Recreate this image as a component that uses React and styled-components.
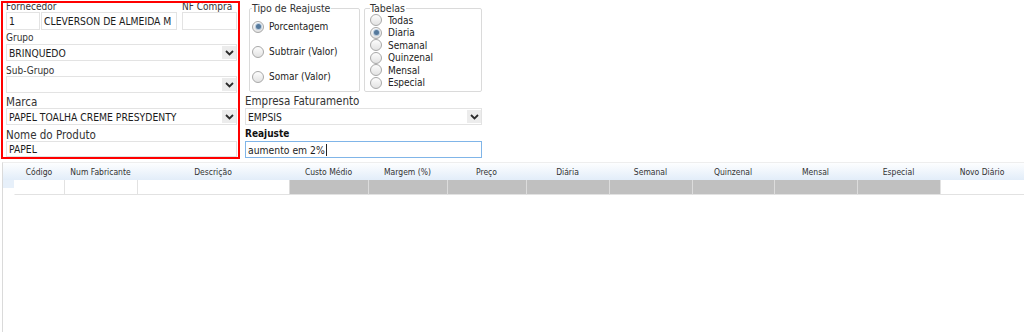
import React from 'react';
import styled, { createGlobalStyle } from 'styled-components';

const GlobalStyle = createGlobalStyle`
  html, body {
    margin: 0;
    padding: 0;
    background: #fff;
  }
  body {
    font-family: "DejaVu Sans Condensed", "DejaVu Sans", Verdana, sans-serif;
    color: #1c1c1c;
    overflow: hidden;
  }
`;

const Page = styled.div`
  width: 1024px;
  height: 332px;
  display: flex;
  flex-direction: column;
  overflow: hidden;
`;

const Top = styled.div`
  display: flex;
  flex: none;
  height: 162px;
`;

// red frame around the product filters
const FilterPanel = styled.div`
  box-sizing: border-box;
  width: 239px;
  height: 158px;
  margin: 1px 0 0 1px;
  border: 2px solid #ff0000;
  padding: 0 1px 0 3px;
  overflow: hidden;
  display: flex;
  flex-direction: column;
`;

const Label = styled.div`
  box-sizing: border-box;
  height: ${p => p.$h || 14}px;
  padding-top: ${p => p.$pt || 0}px;
  font-size: ${p => (p.$big ? '11.5px' : '10px')};
  line-height: ${p => (p.$big ? '13px' : '11px')};
  font-weight: ${p => (p.$bold ? 'bold' : 'normal')};
  color: ${p => (p.$bold ? '#111' : '#333')};
  white-space: nowrap;
`;

const FornecedorRow = styled.div`
  display: flex;
  gap: 5px;
  margin-top: -2px;
`;

const FieldCol = styled.div`
  display: flex;
  flex-direction: column;
  flex: ${p => p.$grow ? 1 : 'none'};
`;

const InputPair = styled.div`
  display: flex;
  gap: 1px;
`;

const Field = styled.div`
  box-sizing: border-box;
  width: ${p => p.$w ? `${p.$w}px` : 'auto'};
  height: ${p => p.$h || 18}px;
  border: 1px solid ${p => p.$focused ? '#80b5e8' : '#e3e3e3'};
  background: #fff;
  padding: 0 2px;
  display: flex;
  align-items: center;
  font-size: 10.3px;
  color: #1c1c1c;
  white-space: nowrap;
  overflow: hidden;
`;

const Caret = styled.span`
  display: inline-block;
  width: 1px;
  height: 12px;
  margin-left: 1px;
  background: #222;
`;

const SelectBox = styled.div`
  box-sizing: border-box;
  height: 17px;
  border: 1px solid #e3e3e3;
  background: #fff;
  display: flex;
  align-items: stretch;
  font-size: 10.3px;
`;

const SelectValue = styled.div`
  flex: 1;
  display: flex;
  align-items: center;
  padding-left: 2px;
  white-space: nowrap;
  overflow: hidden;
`;

const SelectArrow = styled.div`
  width: 14px;
  margin: 1px 0;
  background: #ececec;
  display: flex;
  align-items: center;
  justify-content: center;
`;

const RightColumn = styled.div`
  width: 237px;
  margin-left: 5px;
  display: flex;
  flex-direction: column;
`;

const GroupRow = styled.div`
  display: flex;
  gap: 4px;
  padding-left: 4px;
  height: 92px;
`;

const Group = styled.fieldset`
  box-sizing: border-box;
  width: ${p => p.$w}px;
  height: 89px;
  margin: 3px 0 0 0;
  padding: 0 0 0 ${p => p.$pad}px;
  border: 1px solid #dadada;
  border-radius: 2px;
  min-width: 0;
`;

const Legend = styled.legend`
  padding: 0 1px 0 0;
  font-size: 10.5px;
  line-height: 11px;
  color: #333;
`;

const Option = styled.div`
  display: flex;
  align-items: center;
  gap: ${p => p.$gap}px;
  height: ${p => p.$h}px;
  font-size: 10px;
  color: #222;
  white-space: nowrap;
`;

const RadioCircle = styled.span`
  box-sizing: border-box;
  flex: none;
  width: 12px;
  height: 12px;
  border-radius: 50%;
  border: 1px solid #a8a8a8;
  background: linear-gradient(#fdfdfd, #e2e2e2);
  display: flex;
  align-items: center;
  justify-content: center;

  &::after {
    content: '';
    display: ${p => (p.$checked ? 'block' : 'none')};
    width: 5px;
    height: 5px;
    border-radius: 50%;
    background: #55799c;
    box-shadow: 0 0 0 1px rgba(120, 160, 200, 0.45);
  }
`;

const columns = [
  { title: 'Código', w: 50 },
  { title: 'Num Fabricante', w: 73 },
  { title: 'Descrição', w: 152 },
  { title: 'Custo Médio', w: 79, gray: true },
  { title: 'Margem (%)', w: 79, gray: true },
  { title: 'Preço', w: 79, gray: true },
  { title: 'Diária', w: 83, gray: true },
  { title: 'Semanal', w: 83, gray: true },
  { title: 'Quinzenal', w: 82, gray: true },
  { title: 'Mensal', w: 83, gray: true },
  { title: 'Especial', w: 83, gray: true },
  { title: 'Novo Diário', w: 0 },
];

const gridCols = `11px ${columns.map(c => (c.w ? `${c.w}px` : '1fr')).join(' ')}`;

const Grid = styled.div`
  flex: 1;
  margin-left: 2px;
  border-left: 1px solid #dadada;
  border-top: 1px solid #eeeeee;
  display: flex;
  flex-direction: column;
`;

const HeaderRow = styled.div`
  display: grid;
  grid-template-columns: ${gridCols};
  height: 17px;
  background: linear-gradient(#fdfeff, #e2edf9);
`;

const HeaderCell = styled.div`
  display: flex;
  align-items: center;
  justify-content: center;
  padding-top: 1px;
  font-size: 8.5px;
  color: #333;
  white-space: nowrap;
`;

const DataRow = styled.div`
  display: grid;
  grid-template-columns: ${gridCols};
  height: 15px;
`;

const Indicator = styled.div`
  background: linear-gradient(#e7f0fa 50%, #fff 50%);
`;

const DataCell = styled.div`
  box-sizing: border-box;
  border-bottom: 1px solid #e2e2e2;
  border-left: 1px solid ${p => (p.$gray ? '#dcdcdc' : p.$first ? 'transparent' : '#e2e2e2')};
  background: ${p => (p.$gray ? '#c0c0c0' : '#fff')};
`;

const Chevron = () => (
  <svg width="9" height="6" viewBox="0 0 9 6">
    <path d="M1 1 L4.5 4.5 L8 1" fill="none" stroke="#2b2b2b" strokeWidth="1.8" />
  </svg>
);

const Select = ({ value }) => (
  <SelectBox>
    <SelectValue>{value}</SelectValue>
    <SelectArrow><Chevron /></SelectArrow>
  </SelectBox>
);

const Radio = ({ label, checked, h, gap }) => (
  <Option $h={h} $gap={gap}>
    <RadioCircle $checked={checked} />
    {label}
  </Option>
);

const tabelas = ['Todas', 'Diaria', 'Semanal', 'Quinzenal', 'Mensal', 'Especial'];

export default function App() {
  return (
    <Page>
      <GlobalStyle />
      <Top>
        <FilterPanel>
          <FornecedorRow>
            <FieldCol>
              <Label $h={11}>Fornecedor</Label>
              <InputPair>
                <Field $w={34}>1</Field>
                <Field $w={136}>CLEVERSON DE ALMEIDA M</Field>
              </InputPair>
            </FieldCol>
            <FieldCol $grow>
              <Label $h={11}>NF Compra</Label>
              <Field />
            </FieldCol>
          </FornecedorRow>
          <Label $h={14} $pt={2}>Grupo</Label>
          <Select value="BRINQUEDO" />
          <Label $h={15} $pt={4}>Sub-Grupo</Label>
          <Select value="" />
          <Label $h={15} $pt={3} $big>Marca</Label>
          <Select value="PAPEL TOALHA CREME PRESYDENTY" />
          <Label $h={16} $pt={4} $big>Nome do Produto</Label>
          <Field $h={16}>PAPEL</Field>
        </FilterPanel>

        <RightColumn>
          <GroupRow>
            <Group $w={111} $pad={2}>
              <Legend>Tipo de Reajuste</Legend>
              <Radio label="Porcentagem" checked h={25} gap={5} />
              <Radio label="Subtrair (Valor)" h={25} gap={5} />
              <Radio label="Somar (Valor)" h={25} gap={5} />
            </Group>
            <Group $w={118} $pad={5}>
              <Legend>Tabelas</Legend>
              {tabelas.map(t => (
                <Radio key={t} label={t} checked={t === 'Diaria'} h={12.5} gap={6} />
              ))}
            </Group>
          </GroupRow>
          <Label $h={16} $pt={3} $big>Empresa Faturamento</Label>
          <Select value="EMPSIS" />
          <Label $h={16} $pt={3} $bold>Reajuste</Label>
          <Field $h={17} $focused>
            aumento em 2%<Caret />
          </Field>
        </RightColumn>
      </Top>

      <Grid>
        <HeaderRow>
          <div />
          {columns.map(c => (
            <HeaderCell key={c.title}>{c.title}</HeaderCell>
          ))}
        </HeaderRow>
        <DataRow>
          <Indicator />
          {columns.map((c, i) => (
            <DataCell key={c.title} $gray={c.gray} $first={i === 0} />
          ))}
        </DataRow>
      </Grid>
    </Page>
  );
}
